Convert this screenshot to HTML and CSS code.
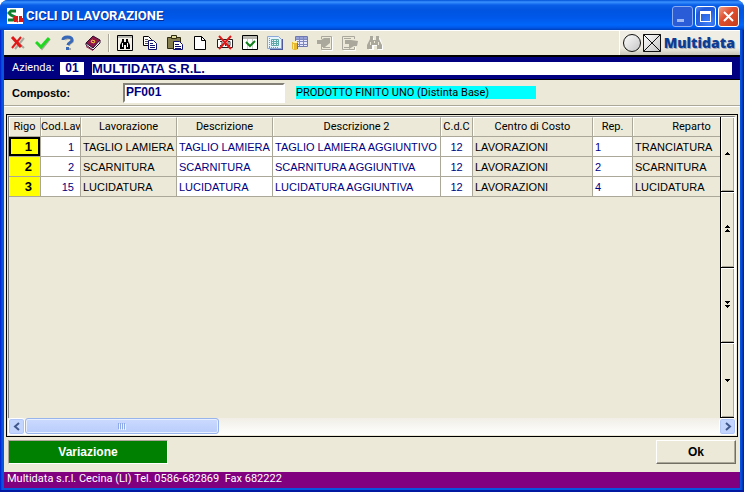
FILE: index.html
```html
<!DOCTYPE html>
<html lang="it">
<head>
    <meta charset="UTF-8">
    <meta name="viewport" content="width=device-width, initial-scale=1.0">
    <title>Cicli di lavorazione</title>
    <link rel="stylesheet" href="styles.css">
</head>
<body>
    <div class="window">
        <!-- Title bar -->
        <header class="titlebar">
            <svg class="app-icon" width="16" height="16" viewBox="0 0 16 16">
                <path fill="#fff" d="M0 0h16v16H0z"/>
                <path fill="none" stroke="#108030" stroke-width="3" d="M9 3H4L2 5l2 2 4 2v2l-2 1H1"/>
                <path fill="none" stroke="#d81818" stroke-width="2" d="M8 14V9h2v2H8l3 3M15 9h-2v2h2v2h-3"/>
            </svg>
            <h1 class="title">CICLI DI LAVORAZIONE</h1>
            <button class="win-btn win-min" aria-label="Riduci a icona">
                <svg width="19" height="19"><path fill="#9db8f5" d="M4 12h7v3H4z"/></svg>
            </button>
            <button class="win-btn" aria-label="Ingrandisci">
                <svg width="19" height="19"><path fill="#fff" fill-rule="evenodd" d="M4 4h11v11H4zM5 7v7h9V7z"/></svg>
            </button>
            <button class="win-btn win-close" aria-label="Chiudi">
                <svg width="19" height="19"><path stroke="#fff" stroke-width="2" d="M5 5l9 9M14 5l-9 9"/></svg>
            </button>
        </header>

        <!-- Toolbar -->
        <div class="toolbar">
            <button class="tool" aria-label="Annulla">
                <svg width="16" height="16">
                    <path fill="none" stroke="#aaa89c" stroke-width="2" d="M4 4l10 9M14 3L5 14"/>
                    <path fill="none" stroke="#e01818" stroke-width="3" d="M2 2l9 10"/>
                    <path fill="none" stroke="#e01818" stroke-width="2" d="M11 2L2 13"/>
                </svg>
            </button>
            <button class="tool" aria-label="Conferma">
                <svg width="16" height="16">
                    <path fill="none" stroke="#aaa89c" stroke-width="2" d="M3 9l4 5 8-10"/>
                    <path fill="none" stroke="#20d820" stroke-width="3" d="M1 7l5 5 8-9"/>
                </svg>
            </button>
            <button class="tool" aria-label="Aiuto">
                <svg width="16" height="16">
                    <path fill="none" stroke="#aaa89c" stroke-width="2" d="M5 5c1-2 8-2 8 1 0 2-4 2-4 5M8 14h3"/>
                    <path fill="none" stroke="#3868b8" stroke-width="3" d="M3 5c0-4 9-4 9 0 0 3-4 2-4 5"/>
                    <path fill="#3868b8" d="M6 12h3v3H6z"/>
                </svg>
            </button>
            <button class="tool" aria-label="Manuale">
                <svg width="16" height="16">
                    <path fill="#901848" stroke="#301030" d="M1 8l7-7 7 4-7 8z"/>
                    <path fill="#fff" stroke="#301030" d="M1 8l7 5 7-8v3l-7 7-7-5z"/>
                    <path fill="#901848" d="M1 11l7 4v1l-7-4z"/>
                    <path fill="none" stroke="#f0c840" stroke-width="1" d="M7 5l3 1-1 2-3-1z"/>
                </svg>
            </button>
            <span class="separator"></span>
            <button class="tool" aria-label="Cerca">
                <svg width="16" height="16">
                    <path fill="#f4f2e8" stroke="#000" d="M.5.5h15v15H.5z"/>
                    <path fill="#b8b8b0" d="M1 1h14v2H1z"/>
                    <path d="M5 4h2v3h2V4h2v2l2 4v4H9v-4H7v4H3v-4l2-4z"/>
                    <path stroke="#fff" d="M5.500 8v4M10.500 8v4"/>
                </svg>
            </button>
            <button class="tool" aria-label="Copia">
                <svg width="16" height="16">
                    <path fill="#fff" stroke="#000" d="M1.500 1.500h5l3 3v6h-8z"/>
                    <path stroke="#555" d="M3 4.500h3M3 6.500h5M3 8.500h5"/>
                    <path fill="#fff" stroke="#101070" d="M6.500 5.500h5l3 3v6h-8z"/>
                    <path stroke="#101070" d="M8 8.500h3M8 10.500h5M8 12.500h5"/>
                </svg>
            </button>
            <button class="tool" aria-label="Incolla">
                <svg width="16" height="16">
                    <path fill="#857f50" stroke="#302c10" d="M.5 2.500h13v11H.5z"/>
                    <path fill="#e0dca0" stroke="#302c10" d="M4.500.5h5v3h-5z"/>
                    <path fill="#fff" stroke="#101070" d="M6.500 6.500h6l3 3v5h-9z"/>
                    <path stroke="#101070" d="M8 9.500h4M8 11.500h6M8 13.500h6"/>
                </svg>
            </button>
            <button class="tool" aria-label="Nuovo">
                <svg width="16" height="16">
                    <path fill="#fff" stroke="#000" d="M2.500 1.500h7l4 4v9h-11z"/>
                    <path fill="none" stroke="#000" d="M9.500 1.500v4h4"/>
                </svg>
            </button>
            <button class="tool" aria-label="Elimina">
                <svg width="16" height="16">
                    <path fill="#fff" stroke="#202020" d="M.5 4.500h15v8H.5z"/>
                    <path fill="none" stroke="#333" d="M3 6.500h2v4H3M11 6.500h2v4h-2zM8.500 6v5"/>
                    <path stroke="#e01818" stroke-width="2" d="M2 1l12 13M14 1L2 14"/>
                </svg>
            </button>
            <button class="tool" aria-label="Seleziona">
                <svg width="16" height="16">
                    <path fill="#fff" stroke="#000" d="M.5.5h15v14H.5z"/>
                    <path fill="#b8b8b0" d="M1 1h14v3H1z"/>
                    <path stroke="#ccc" d="M5.500 4v10M10.500 4v10"/>
                    <path fill="none" stroke="#108018" stroke-width="2" d="M4 7l4 4 5-5"/>
                </svg>
            </button>
            <button class="tool" aria-label="Elenco">
                <svg width="16" height="16">
                    <path fill="#505898" d="M3 4h13v11H3z"/>
                    <path fill="#e8f4fc" stroke="#8ca8d8" d="M.5 1.500h11l3 3v9H.5z"/>
                    <path fill="none" stroke="#60a8a8" d="M4.500 4.500h7v6h-7zM4 6.500h7M4 8.500h7M6.500 4v6M9.500 4v6"/>
                    <path stroke="#60a8a8" stroke-dasharray="1 1" d="M2.500 3v9M2 12.500h10"/>
                </svg>
            </button>
            <button class="tool" aria-label="Archivio">
                <svg width="16" height="16">
                    <path fill="#e8e8ff" stroke="#7078b0" d="M3.500 1.500h12v10h-12z"/>
                    <path fill="#98a0d8" d="M4 2h11v2H4z"/>
                    <path stroke="#8088c0" d="M4 4.500h11M4 6.500h11M4 9.500h11M7.500 2v9M11.500 2v9"/>
                    <path fill="#e8b830" d="M0 7h6v7l-2 1H2l-2-1z"/>
                    <path fill="#fff0a0" d="M1 6h4v2H1zM1 9h1v5H1z"/>
                    <path fill="#a07018" d="M5 8h1v6H5z"/>
                </svg>
            </button>
            <button class="tool" aria-label="Precedente" disabled>
                <svg width="16" height="16">
                    <path fill="none" stroke="#fff" d="M5 15.500h10.500V2"/>
                    <path fill="none" stroke="#aaa89c" d="M4.500 9v5.500h10V1.500h-10V4M6 12.500h7"/>
                    <path fill="#aaa89c" d="M0 5h4l3-2h6v5l-5 4H5V9H0z"/>
                </svg>
            </button>
            <button class="tool" aria-label="Successivo" disabled>
                <svg width="16" height="16">
                    <path fill="none" stroke="#fff" d="M1.500 15.500h12V12"/>
                    <path fill="none" stroke="#aaa89c" d="M12.500 4V1.500H.5v13h12V12M2 3.500h7M2 12.500h5"/>
                    <path fill="#aaa89c" d="M3 5h6l7 1-1 5h-3l-5 3V9H3z"/>
                </svg>
            </button>
            <button class="tool" aria-label="Trova successivo" disabled>
                <svg width="16" height="16">
                    <path fill="#fff" d="M4 3h3v3h3V3h3l3 8v4h-5v-4H7v4H2v-4z"/>
                    <path fill="#aaa89c" d="M3 1h3v4h3V1h3v3l3 6v4h-5v-4H5v4H0v-4l3-6z"/>
                    <path stroke="#ece9d8" d="M3.500 7v3M11.500 7v3M7.500 6v2"/>
                </svg>
            </button>
            <div class="brand">
                <svg width="39" height="20" viewBox="0 0 39 20">
                    <defs>
                        <linearGradient id="steel" x1="0" y1="0" x2="1" y2="1">
                            <stop offset="0" stop-color="#fff"/>
                            <stop offset="1" stop-color="#c4c4c4"/>
                        </linearGradient>
                    </defs>
                    <circle cx="9" cy="10" r="8.500" fill="url(#steel)" stroke="#111"/>
                    <path fill="url(#steel)" stroke="#111" d="M20.500 1.500h17v17h-17zM20.500 1.500l17 17M37.500 1.500l-17 17"/>
                </svg>
                <span class="brand-name">Multidata</span>
            </div>
        </div>

        <!-- Company -->
        <div class="company">
            <span class="company-label">Azienda:</span>
            <span class="company-code">01</span>
            <span class="company-name">MULTIDATA S.R.L.</span>
        </div>

        <!-- Product -->
        <div class="product">
            <label for="composto">Composto:</label>
            <input type="text" id="composto" value="PF001">
            <span class="product-name">PRODOTTO FINITO UNO (Distinta Base)</span>
        </div>

        <!-- Work cycles grid -->
        <main class="content">
            <div class="grid">
                <div class="grid-body">
                    <div class="grid-scroll">
                        <table>
                            <colgroup>
                                <col class="w-rigo">
                                <col class="w-cod">
                                <col class="w-text">
                                <col class="w-text">
                                <col class="w-descr2">
                                <col class="w-cdc">
                                <col class="w-centro">
                                <col class="w-rep">
                                <col>
                            </colgroup>
                            <thead>
                                <tr>
                                    <th>Rigo</th>
                                    <th class="tight">Cod.Lav</th>
                                    <th>Lavorazione</th>
                                    <th>Descrizione</th>
                                    <th>Descrizione 2</th>
                                    <th class="tight">C.d.C</th>
                                    <th>Centro di Costo</th>
                                    <th>Rep.</th>
                                    <th class="last">Reparto</th>
                                </tr>
                            </thead>
                            <tbody>
                                <tr>
                                    <td class="row-no current">1</td>
                                    <td class="edit num">1</td>
                                    <td>TAGLIO LAMIERA</td>
                                    <td class="edit">TAGLIO LAMIERA</td>
                                    <td class="edit">TAGLIO LAMIERA AGGIUNTIVO</td>
                                    <td class="edit center">12</td>
                                    <td>LAVORAZIONI</td>
                                    <td class="edit">1</td>
                                    <td>TRANCIATURA</td>
                                </tr>
                                <tr>
                                    <td class="row-no">2</td>
                                    <td class="edit num">2</td>
                                    <td>SCARNITURA</td>
                                    <td class="edit">SCARNITURA</td>
                                    <td class="edit">SCARNITURA AGGIUNTIVA</td>
                                    <td class="edit center">12</td>
                                    <td>LAVORAZIONI</td>
                                    <td class="edit">2</td>
                                    <td>SCARNITURA</td>
                                </tr>
                                <tr>
                                    <td class="row-no">3</td>
                                    <td class="edit num">15</td>
                                    <td>LUCIDATURA</td>
                                    <td class="edit">LUCIDATURA</td>
                                    <td class="edit">LUCIDATURA AGGIUNTIVA</td>
                                    <td class="edit center">12</td>
                                    <td>LAVORAZIONI</td>
                                    <td class="edit">4</td>
                                    <td>LUCIDATURA</td>
                                </tr>
                            </tbody>
                        </table>
                    </div>
                    <div class="pager">
                        <button aria-label="Riga precedente"><svg width="5" height="8"><path d="M2 2h1v1h1v1h1v1H0V4h1V3h1z"/></svg></button>
                        <button aria-label="Pagina precedente"><svg width="5" height="8"><path d="M2 0h1v1h1v1h1v1H0V2h1V1h1zM2 4h1v1h1v1h1v1H0V6h1V5h1z"/></svg></button>
                        <button aria-label="Pagina successiva"><svg width="5" height="8"><path d="M0 0h5v1H4v1H3v1H2V2H1V1H0zM0 4h5v1H4v1H3v1H2V6H1V5H0z"/></svg></button>
                        <button aria-label="Riga successiva"><svg width="5" height="8"><path d="M0 3h5v1H4v1H3v1H2V5H1V4H0z"/></svg></button>
                    </div>
                </div>
                <div class="hscroll">
                    <button class="hscroll-btn" aria-label="Scorri a sinistra">
                        <svg width="8" height="9"><path fill="none" stroke="#40588c" stroke-width="2" d="M6 1L2 4.500 6 8"/></svg>
                    </button>
                    <div class="hscroll-track">
                        <div class="hscroll-thumb">
                            <svg width="8" height="7"><path stroke="#8ca8e8" d="M.5 0v6M2.500 0v6M4.500 0v6M6.500 0v6"/><path stroke="#eef4fe" d="M1.500 1v6M3.500 1v6M5.500 1v6M7.500 1v6"/></svg>
                        </div>
                    </div>
                    <button class="hscroll-btn" aria-label="Scorri a destra">
                        <svg width="8" height="9"><path fill="none" stroke="#40588c" stroke-width="2" d="M2 1l4 3.500L2 8"/></svg>
                    </button>
                </div>
            </div>
        </main>

        <div class="actions">
            <span class="mode">Variazione</span>
            <button class="ok">Ok</button>
        </div>

        <footer class="statusbar">Multidata s.r.l. Cecina (LI) Tel. 0586-682869&nbsp; Fax 682222</footer>
    </div>
</body>
</html>
```

FILE: styles.css
```css
* {
    box-sizing: border-box;
}
body {
    margin: 0;
    font-family: Roboto, "Liberation Sans", Arial, sans-serif;
    font-size: 11px;
    line-height: 14px;
    color: #000;
    background: #fff;
}
button {
    margin: 0;
    padding: 0;
    font: inherit;
    color: inherit;
}
svg {
    display: block;
}
.window {
    display: flex;
    flex-direction: column;
    height: 100vh;
    padding: 0 4px 4px;
    border-radius: 8px 8px 0 0;
    background: linear-gradient(90deg, #0019cf 0, #0855dd 2px, #0855dd calc(100% - 3px), #001a9c 100%);
    box-shadow: inset 0 -2px #0019a0;
    overflow: hidden;
}

/* Title bar */
.titlebar {
    display: flex;
    align-items: center;
    gap: 2px;
    height: 30px;
    flex: none;
    margin: 0 -4px;
    padding: 2px 5px 0 7px;
    background: linear-gradient(#0050d8 0, #3a93ff 2px, #0a5fe8 5px, #0054e0 10px, #0058ea 18px, #0066fc 25px, #0054e4 28px, #0040b8 30px);
}
.title {
    flex: 1;
    margin: 0 0 0 1px;
    font-size: 13px;
    font-weight: bold;
    color: #fff;
    text-shadow: 1px 1px #0a2a90;
}
.win-btn {
    width: 21px;
    height: 21px;
    border: 1px solid #fff;
    border-radius: 3px;
    background: radial-gradient(circle at 70% 80%, #4080f8, #2058d8 70%, #5a8cf0);
}
.win-min {
    border-color: #8cacf0;
    background: #2a5cd8;
}
.win-close {
    background: linear-gradient(135deg, #f0a088, #e05030 40%, #c83c18);
}

/* Toolbar */
.toolbar {
    display: flex;
    align-items: center;
    height: 25px;
    flex: none;
    padding-left: 1px;
    background: #ece9d8;
    border-top: 1px solid #fff;
}
.tool {
    display: grid;
    place-items: center;
    width: 25px;
    height: 24px;
    border: 0;
    background: none;
}
.separator {
    width: 2px;
    height: 18px;
    margin: 0 2px 0 3px;
    background: #aca899;
    border-right: 1px solid #fff;
}
.brand {
    display: flex;
    align-items: center;
    gap: 2px;
    height: 24px;
    margin-left: auto;
    padding: 0 5px 0 3px;
    border-left: 1px solid #fff;
    background: linear-gradient(#f0eee4 70%, #c8c6ba);
}
.brand-name {
    font-family: "Open Sans", Lato, sans-serif;
    font-size: 14px;
    font-weight: 800;
    color: #0c3c94;
    text-shadow: 1px 1px #a8acb8;
}

/* Company */
.company {
    display: flex;
    align-items: center;
    height: 25px;
    flex: none;
    padding: 0 8px;
    border-top: 2px solid #000;
    border-bottom: 1px solid #000;
    background: #000080;
    color: #fff;
}
.company-label {
    width: 48px;
}
.company-code,
.company-name {
    height: 13px;
    line-height: 13px;
    background: #fff;
    color: #000080;
    font-family: "Liberation Sans", Arial, sans-serif;
    font-size: 13px;
    font-weight: bold;
}
.company-code {
    width: 24px;
    margin-right: 8px;
    font-size: 12px;
    text-align: center;
}
.company-name {
    flex: 1;
}

/* Product */
.product {
    display: flex;
    align-items: center;
    height: 26px;
    flex: none;
    padding: 0 8px;
    background: #ece9d8;
    border-bottom: 1px solid #aca899;
}
.product label {
    width: 111px;
    font-family: "Liberation Sans", Arial, sans-serif;
    font-weight: bold;
}
.product input {
    width: 162px;
    height: 20px;
    padding: 0 0 1px 1px;
    border: 2px solid;
    border-color: #848278 #fff #fff #848278;
    background: #fff;
    color: #000080;
    font: bold 12px "Liberation Sans", Arial, sans-serif;
}
.product-name {
    width: 240px;
    height: 13px;
    margin-left: 11px;
    line-height: 14px;
    background: #0ff;
}

/* Grid */
.content {
    display: flex;
    flex: 1;
    min-height: 0;
    padding: 7px 2px 0;
    border-top: 1px solid #fff;
    background: #ece9d8;
}
.grid {
    display: flex;
    flex-direction: column;
    flex: 1;
    min-width: 0;
    padding: 1px;
    border: 1px solid #000;
}
.grid-body {
    display: flex;
    flex: 1;
    min-height: 0;
    border-top: 1px solid #808080;
    border-left: 1px solid #808080;
    border-right: 2px solid #fff;
}
.grid-scroll {
    flex: 1;
    min-width: 0;
    overflow: hidden;
}
table {
    width: 100%;
    table-layout: fixed;
    border-collapse: separate;
    border-spacing: 0;
}
.w-rigo, .w-cdc {
    width: 32px;
}
.w-cod, .w-rep {
    width: 40px;
}
.w-text {
    width: 96px;
}
.w-descr2 {
    width: 168px;
}
.w-centro {
    width: 120px;
}
th, td {
    height: 20px;
    padding: 0 2px;
    border-right: 1px solid #aca899;
    border-bottom: 1px solid #aca899;
    overflow: hidden;
    white-space: nowrap;
    text-align: left;
    font-weight: normal;
}
td {
    font-family: "Liberation Sans", Arial, sans-serif;
}
th {
    text-align: center;
    border-top: 1px solid #fff;
    box-shadow: inset 1px 0 #fff;
}
th.tight {
    padding: 0;
}
th.last, td:last-child {
    border-right: 0;
}
th.last {
    padding-left: 32px;
}
.edit {
    background: #fff;
    color: #000080;
}
.num {
    padding-right: 6px;
    text-align: right;
}
.center {
    text-align: center;
}
.row-no {
    padding-right: 8px;
    background: #ff0;
    text-align: right;
    font-size: 13px;
    font-weight: bold;
}
.current {
    box-shadow: inset 0 0 0 2px #000;
}
.pager {
    display: flex;
    flex-direction: column;
    width: 14px;
    border-left: 1px solid #000;
}
.pager button {
    display: grid;
    place-items: center;
    flex: 1;
    border: 0;
    border-bottom: 1px solid #000;
    background: #ece9d8;
    box-shadow: inset 1px 1px #fff, inset -1px -1px #aca899;
}
.hscroll {
    display: flex;
    height: 17px;
    flex: none;
    background: linear-gradient(#f0eee6, #fff);
}
.hscroll-btn {
    display: grid;
    place-items: center;
    width: 17px;
    height: 17px;
    border: 1px solid #fff;
    border-radius: 3px;
    background: #c3d5fd;
    box-shadow: inset 0 0 0 1px #b0c6f8;
}
.hscroll-track {
    flex: 1;
}
.hscroll-thumb {
    display: grid;
    place-items: center;
    width: 28%;
    height: 16px;
    border: 1px solid #98b4ec;
    border-radius: 3px;
    background: linear-gradient(#cbdafe, #b9cdfb);
    box-shadow: inset 0 0 0 1px #e8f0ff;
}

/* Bottom area */
.actions {
    display: flex;
    justify-content: space-between;
    height: 35px;
    flex: none;
    padding: 3px 4px 8px;
    background: #ece9d8;
    font-family: "Liberation Sans", Arial, sans-serif;
    font-size: 12px;
    font-weight: bold;
}
.mode {
    width: 160px;
    height: 24px;
    border: 1px solid;
    border-color: #aca899 #fff #fff #aca899;
    background: #008000;
    color: #fff;
    line-height: 22px;
    text-align: center;
}
.ok {
    width: 80px;
    height: 24px;
    border: 1px solid;
    border-color: #fff #716f64 #716f64 #fff;
    background: #ece9d8;
    box-shadow: inset -1px -1px #aca899;
}
.statusbar {
    height: 16px;
    flex: none;
    padding-left: 3px;
    background: #800080;
    color: #fff;
}
```
